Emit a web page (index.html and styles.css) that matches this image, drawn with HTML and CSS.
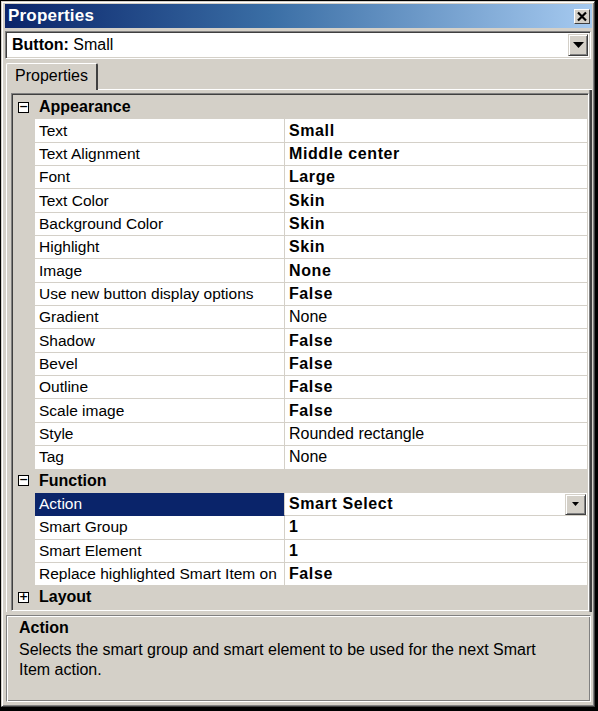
FILE: index.html
```html
<!DOCTYPE html>
<html>
<head>
<meta charset="utf-8">
<link rel="stylesheet" href="styles.css">
</head>
<body>
<div class="window">
  <div class="titlebar">
    <span class="title">Properties</span>
    <span class="close"><svg width="12" height="11" viewBox="0 0 12 11"><path d="M2 1.5 L10 9.5 M10 1.5 L2 9.5" stroke="#000" stroke-width="2.2"/></svg></span>
  </div>
  <div class="combo">
    <div class="combo-text"><b>Button:</b> Small</div>
    <div class="combo-btn"><svg width="11" height="6" viewBox="0 0 11 6"><path d="M0 0 H11 L5.5 6 Z" fill="#000"/></svg></div>
  </div>
  <div class="tabs">
    <div class="tab">Properties</div>
    <div class="tab-rest"></div>
  </div>
  <div class="panel">
    <div class="grid">
      <div class="cat"><span class="toggle">−</span><span>Appearance</span></div>
      <div class="row"><div class="m"></div><div class="name">Text</div><div class="value b">Small</div></div>
      <div class="row"><div class="m"></div><div class="name">Text Alignment</div><div class="value b">Middle center</div></div>
      <div class="row"><div class="m"></div><div class="name">Font</div><div class="value b">Large</div></div>
      <div class="row"><div class="m"></div><div class="name">Text Color</div><div class="value b">Skin</div></div>
      <div class="row"><div class="m"></div><div class="name">Background Color</div><div class="value b">Skin</div></div>
      <div class="row"><div class="m"></div><div class="name">Highlight</div><div class="value b">Skin</div></div>
      <div class="row"><div class="m"></div><div class="name">Image</div><div class="value b">None</div></div>
      <div class="row"><div class="m"></div><div class="name">Use new button display options</div><div class="value b">False</div></div>
      <div class="row"><div class="m"></div><div class="name">Gradient</div><div class="value">None</div></div>
      <div class="row"><div class="m"></div><div class="name">Shadow</div><div class="value b">False</div></div>
      <div class="row"><div class="m"></div><div class="name">Bevel</div><div class="value b">False</div></div>
      <div class="row"><div class="m"></div><div class="name">Outline</div><div class="value b">False</div></div>
      <div class="row"><div class="m"></div><div class="name">Scale image</div><div class="value b">False</div></div>
      <div class="row"><div class="m"></div><div class="name">Style</div><div class="value">Rounded rectangle</div></div>
      <div class="row"><div class="m"></div><div class="name">Tag</div><div class="value">None</div></div>
      <div class="cat"><span class="toggle">−</span><span>Function</span></div>
      <div class="row"><div class="m"></div><div class="name sel">Action</div><div class="value b">Smart Select<span class="mini-btn"><svg width="7" height="4" viewBox="0 0 7 4"><path d="M0 0 H7 L3.5 4 Z" fill="#000"/></svg></span></div></div>
      <div class="row"><div class="m"></div><div class="name">Smart Group</div><div class="value b">1</div></div>
      <div class="row"><div class="m"></div><div class="name">Smart Element</div><div class="value b">1</div></div>
      <div class="row"><div class="m"></div><div class="name">Replace highlighted Smart Item on</div><div class="value b">False</div></div>
      <div class="cat"><span class="toggle">+</span><span>Layout</span></div>
    </div>
  </div>
  <div class="desc">
    <div class="desc-title">Action</div>
    <div class="desc-text">Selects the smart group and smart element to be used for the next Smart Item action.</div>
  </div>
</div>
</body>
</html>
```
FILE: styles.css
```css
html, body {
  margin: 0;
  padding: 0;
  background: #000;
  width: 598px;
  height: 711px;
  overflow: hidden;
}
body {
  font-family: "Liberation Sans", Arial, sans-serif;
  font-size: 16px;
  color: #000;
}
.window {
  box-sizing: border-box;
  margin: 1px 3px 0 1px;
  height: 706px;
  background: #d4d0c8;
  border-top: 1px solid #d4d0c8;
  border-left: 1px solid #d4d0c8;
  border-right: 1px solid #404040;
  border-bottom: 1px solid #404040;
  box-shadow: inset 1px 1px 0 #fff, inset -1px -1px 0 #808080;
  padding: 2px 2px 0 3px;
  display: flex;
  flex-direction: column;
}
.titlebar {
  height: 24px;
  background: linear-gradient(to right, #0a246a 0%, #3a6ea5 45%, #a6caf0 100%);
  display: flex;
  align-items: center;
  justify-content: space-between;
  padding: 0 2px 0 3px;
}
.title {
  color: #fff;
  font-weight: bold;
  font-size: 17px;
  letter-spacing: 0.2px;
}
.close {
  width: 16px;
  height: 15px;
  background: #d4d0c8;
  box-sizing: border-box;
  border-top: 1px solid #fff;
  border-left: 1px solid #fff;
  border-right: 1px solid #404040;
  border-bottom: 1px solid #404040;
  display: flex;
  align-items: center;
  justify-content: center;
}
.combo {
  margin-top: 3px;
  height: 28px;
  box-sizing: border-box;
  background: #fff;
  border-top: 1px solid #808080;
  border-left: 1px solid #808080;
  border-right: 1px solid #fff;
  border-bottom: 1px solid #fff;
  box-shadow: inset 1px 1px 0 #404040, inset -1px -1px 0 #d4d0c8;
  display: flex;
  align-items: center;
  padding: 2px 2px 2px 6px;
  margin-right: 1px;
}
.combo-text {
  flex: 1;
  font-size: 16px;
}
.combo-btn {
  width: 20px;
  height: 22px;
  box-sizing: border-box;
  background: #d4d0c8;
  border-top: 1px solid #d4d0c8;
  border-left: 1px solid #d4d0c8;
  border-right: 1px solid #404040;
  border-bottom: 1px solid #404040;
  box-shadow: inset 1px 1px 0 #fff, inset -1px -1px 0 #808080;
  display: flex;
  align-items: center;
  justify-content: center;
}
.tabs {
  margin-top: 3px;
  height: 28px;
  display: flex;
  align-items: flex-end;
}
.tab {
  height: 27px;
  box-sizing: border-box;
  padding: 3px 8px 0 8px;
  border-top: 1px solid #fff;
  border-left: 1px solid #fff;
  border-right: 2px solid #404040;
  border-radius: 2px 2px 0 0;
  margin-left: 1px;
  font-size: 16px;
  width: 92px;
  text-align: center;
}
.tab-rest {
  flex: 1;
  border-bottom: 1px solid #fff;
}
.panel {
  height: 522px;
  box-sizing: border-box;
  border-left: 1px solid #fff;
  border-right: 2px solid #404040;
  margin-left: 1px;
  margin-right: 0;
  padding: 3px 1px 0 4px;
  box-shadow: inset -1px 0 0 #808080;
}
.grid {
  height: 518px;
  box-sizing: border-box;
  border-top: 1px solid #808080;
  border-left: 1px solid #808080;
  border-right: 1px solid #fff;
  border-bottom: 1px solid #fff;
  box-shadow: inset 1px 1px 0 #404040, inset -1px -1px 0 #d4d0c8;
  padding: 2px 1px 0 2px;
  display: flex;
  flex-direction: column;
}
.cat {
  height: 23.35px;
  flex: none;
  display: flex;
  align-items: center;
  font-weight: bold;
  font-size: 16px;
  box-sizing: border-box;
  border-bottom: 1px solid #d4d0c8;
}
.toggle {
  width: 11px;
  height: 11px;
  box-sizing: border-box;
  border: 1px solid #000;
  background: #fff;
  margin: 0 10px 0 4px;
  font-size: 11px;
  line-height: 8px;
  text-align: center;
  font-weight: bold;
  font-family: "DejaVu Sans", sans-serif;
}
.row {
  height: 23.35px;
  flex: none;
  display: flex;
  box-sizing: border-box;
}
.m {
  width: 21px;
  flex: none;
}
.name {
  width: 250px;
  flex: none;
  background: #fff;
  border-bottom: 1px solid #d4d0c8;
  border-right: 1px solid #d4d0c8;
  padding-left: 4px;
  display: flex;
  align-items: center;
  white-space: nowrap;
  overflow: hidden;
  box-sizing: border-box;
  font-size: 15.5px;
}
.name.sel {
  background: #0a246a;
  color: #fff;
  border-bottom-color: #0a246a;
}
.value {
  flex: 1;
  background: #fff;
  border-bottom: 1px solid #d4d0c8;
  padding-left: 4px;
  display: flex;
  align-items: center;
  box-sizing: border-box;
  white-space: nowrap;
}
.value.b {
  font-weight: bold;
  letter-spacing: 0.6px;
}
.mini-btn {
  margin-left: auto;
  margin-right: 1px;
  width: 21px;
  height: 21px;
  box-sizing: border-box;
  background: #d4d0c8;
  border-top: 1px solid #d4d0c8;
  border-left: 1px solid #d4d0c8;
  border-right: 1px solid #404040;
  border-bottom: 1px solid #404040;
  box-shadow: inset 1px 1px 0 #fff, inset -1px -1px 0 #808080;
  display: flex;
  align-items: center;
  justify-content: center;
}
.desc {
  margin-top: 3px;
  margin-right: 1px;
  margin-left: 1px;
  height: 87px;
  box-sizing: border-box;
  border-top: 1px solid #808080;
  border-left: 1px solid #808080;
  border-right: 1px solid #fff;
  border-bottom: 1px solid #fff;
  box-shadow: inset 1px 1px 0 #fff, inset -1px -1px 0 #808080;
  padding: 2px 6px 0 12px;
}
.desc-title {
  font-weight: bold;
  font-size: 16px;
  line-height: 19px;
}
.desc-text {
  font-size: 16px;
  line-height: 20px;
  margin-top: 3px;
  max-width: 522px;
}
```
